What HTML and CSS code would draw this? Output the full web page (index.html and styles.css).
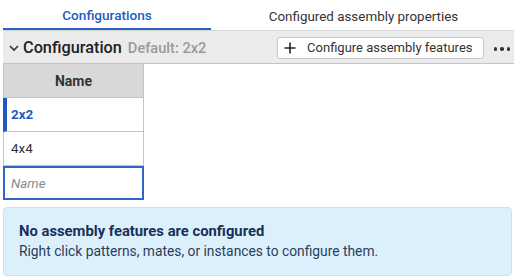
FILE: index.html
```html
<!DOCTYPE html>
<html>
<head>
<meta charset="utf-8">
<link rel="stylesheet" href="styles.css">
</head>
<body>
<div class="panel">
  <div class="tabs">
    <div class="tab active">Configurations</div>
    <div class="tab">Configured assembly properties</div>
  </div>
  <div class="header">
    <div class="title">
      <svg class="chev" width="12" height="12" viewBox="0 0 12 12"><path d="M2 4 L6 8 L10 4" fill="none" stroke="#333" stroke-width="1.6"/></svg>
      <span class="name">Configuration</span>
      <span class="default">Default: 2x2</span>
    </div>
    <div class="actions">
      <button class="btn"><svg width="12" height="12" viewBox="0 0 12 12"><path d="M6 0.5 V11.5 M0.5 6 H11.5" stroke="#222" stroke-width="1.6"/></svg><span>Configure assembly features</span></button>
      <div class="dots"><i></i><i></i><i></i></div>
    </div>
  </div>
  <div class="table">
    <div class="th">Name</div>
    <div class="row selected">2x2</div>
    <div class="row">4x4</div>
    <div class="row input">Name</div>
  </div>
  <div class="info">
    <div class="info-title">No assembly features are configured</div>
    <div class="info-text">Right click patterns, mates, or instances to configure them.</div>
  </div>
</div>
</body>
</html>
```
FILE: styles.css
```css
* { box-sizing: border-box; }
body { margin: 0; background: #fff; font-family: Roboto, sans-serif; color: #333; }
.panel { padding: 0 2px 0 3px; }
.tabs { display: flex; height: 30px; }
.tab { display: flex; align-items: center; justify-content: center; font-size: 13.4px; color: #333; padding-top: 2px; }
.tab:first-child { width: 208px; }
.tab:last-child { flex: 1; padding-left: 4px; }
.tab.active { color: #1f5bbf; font-weight: 500; font-size: 13.6px; border-bottom: 2px solid #2a63c4; }
.header { display: flex; align-items: center; justify-content: space-between; height: 34px; background: #ebebeb; border-top: 1px solid #d6d6d6; border-bottom: 1px solid #c4c4c4; margin-right: -2px; }
.title { display: flex; align-items: center; padding-left: 5px; }
.chev { margin-right: 3px; margin-top: 2px; }
.name { font-size: 16.3px; font-weight: 500; color: #222; }
.default { font-size: 14.6px; color: #9a9a9a; font-weight: 500; margin-left: 6px; margin-top: 1px; }
.actions { display: flex; align-items: center; }
.btn { display: flex; align-items: center; gap: 11px; height: 22px; padding: 0 10px 0 6px; background: #fff; border: 1px solid #c8c8c8; border-radius: 3px; font-family: inherit; font-size: 13px; color: #333; margin-top: 1px; }
.dots { display: flex; gap: 3px; padding: 4px 4px 0 10px; }
.dots i { width: 3.5px; height: 3.5px; border-radius: 50%; background: #333; display: block; }
.table { width: 141px; border-left: 1px solid #c4c4c4; border-right: 1px solid #c4c4c4; }
.th { height: 34px; background: #d8d8d8; border-bottom: 1px solid #c4c4c4; display: flex; align-items: center; justify-content: center; font-weight: 700; font-size: 14px; color: #333; }
.row { height: 34px; border-bottom: 1px solid #c4c4c4; display: flex; align-items: center; padding-left: 7px; font-size: 13.4px; color: #333; }
.row.selected { color: #1f5bbf; font-weight: 700; border-left: 4px solid #1f5bbf; margin-left: -1px; padding-left: 4px; }
.row.input { border: 2px solid #2f66c4; margin: 0 -1px; font-style: italic; color: #8a8a8a; padding-left: 6px; }
.info { margin-top: 7px; height: 69px; background: #dcf0fb; border: 1px solid #c6e3f5; border-radius: 4px; padding: 14px 0 0 15px; }
.info-title { font-weight: 700; font-size: 14.8px; color: #16305a; }
.info-text { font-size: 13.8px; color: #2a3f5c; margin-top: 3px; }
```
